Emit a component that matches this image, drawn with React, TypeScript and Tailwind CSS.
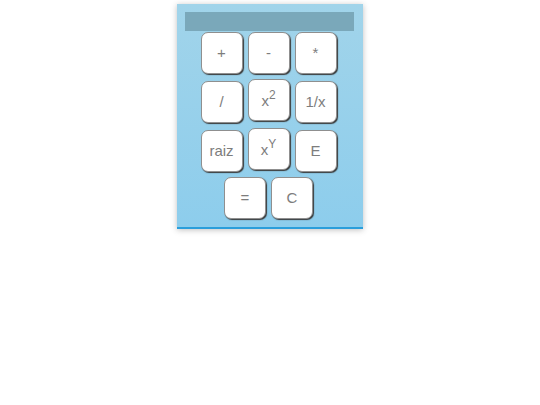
import React from 'react'

type Key = { label: React.ReactNode; raised?: boolean }

const Sup = ({ children }: { children: React.ReactNode }) => (
  <sup className="text-[12px] -top-[7px]">{children}</sup>
)

const rows: Key[][] = [
  [{ label: '+' }, { label: '-' }, { label: '*' }],
  [{ label: '/' }, { label: <>x<Sup>2</Sup></>, raised: true }, { label: '1/x' }],
  [{ label: 'raiz' }, { label: <>x<Sup>Y</Sup></>, raised: true }, { label: 'E' }],
  [{ label: '=' }, { label: 'C' }],
]

const CalcKey = ({ k }: { k: Key }) => (
  <button
    className={`w-[42px] h-[42px] flex items-center justify-center bg-white border border-[#8f8f8f] rounded-[7px] shadow-[1px_1px_1px_#3a3a3a] text-[15px] text-[#7d7d7d] ${k.raised ? 'mb-[2px] pt-[3px]' : ''}`}
  >
    {k.label}
  </button>
)

const App = () => {
  return (
    <div className="w-[540px] h-[405px] bg-white font-['Liberation_Sans',Arial,sans-serif]">
      <div className="mx-auto mt-[4px] w-[186px] pt-[8px] pb-[8px] pl-[8px] pr-[9px] bg-gradient-to-b from-[#a1d4ea] to-[#8dcdec] border-b-2 border-[#2a9edb] shadow-[0_1px_6px_rgba(0,0,0,0.25)]">
        <div className="h-[19px] bg-[#7aa8ba]" />
        <div className="mt-[1px] flex flex-col gap-[5px] pr-[2px]">
          {rows.map((row, i) => (
            <div key={i} className="flex justify-center items-end gap-[5px]">
              {row.map((k, j) => (
                <CalcKey key={j} k={k} />
              ))}
            </div>
          ))}
        </div>
      </div>
    </div>
  )
}

export default App
